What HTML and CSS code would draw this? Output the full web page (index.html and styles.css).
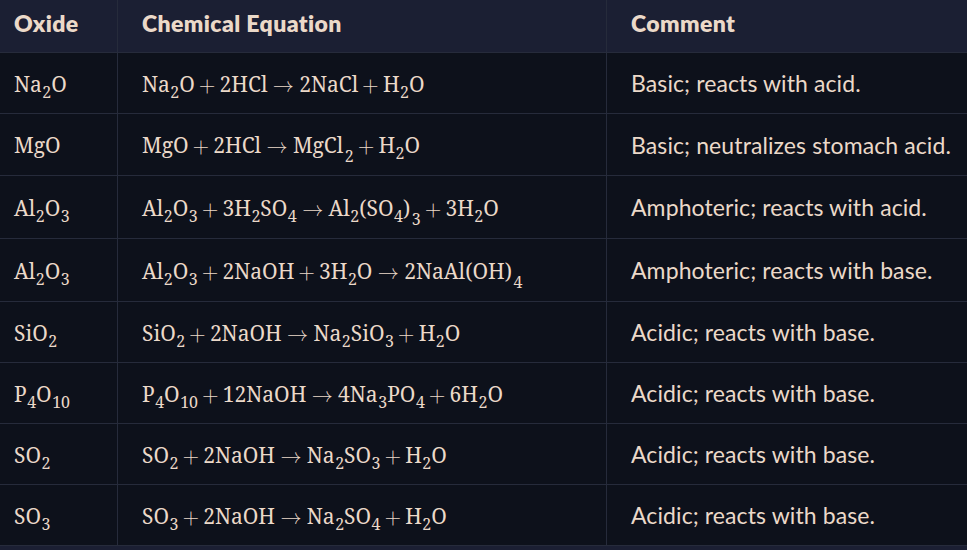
FILE: index.html
```html
<!DOCTYPE html>
<html>
<head>
<meta charset="utf-8">
<link rel="stylesheet" href="styles.css">
</head>
<body>
<div class="wrap">
<table class="tbl">
<thead>
<tr><th class="c1">Oxide</th><th class="c2">Chemical Equation</th><th class="c3">Comment</th></tr>
</thead>
<tbody>
<tr>
<td class="c1"><span class="chem">Na<sub class="s">2</sub>O</span></td>
<td class="c2"><span class="chem">Na<sub class="s">2</sub>O<span class="op">+</span>2HCl<span class="rel">→</span>2NaCl<span class="op">+</span>H<sub class="s">2</sub>O</span></td>
<td class="c3">Basic; reacts with acid.</td>
</tr>
<tr class="h61">
<td class="c1"><span class="chem">MgO</span></td>
<td class="c2"><span class="chem">MgO<span class="op">+</span>2HCl<span class="rel">→</span>MgCl<sub class="s lo">2</sub><span class="op">+</span>H<sub class="s">2</sub>O</span></td>
<td class="c3">Basic; neutralizes stomach acid.</td>
</tr>
<tr class="h62">
<td class="c1"><span class="chem">Al<sub class="s">2</sub>O<sub class="s">3</sub></span></td>
<td class="c2"><span class="chem">Al<sub class="s">2</sub>O<sub class="s">3</sub><span class="op">+</span>3H<sub class="s">2</sub>SO<sub class="s">4</sub><span class="rel">→</span>Al<sub class="s">2</sub>(SO<sub class="s">4</sub>)<sub class="s lo">3</sub><span class="op">+</span>3H<sub class="s">2</sub>O</span></td>
<td class="c3">Amphoteric; reacts with acid.</td>
</tr>
<tr class="h62">
<td class="c1"><span class="chem">Al<sub class="s">2</sub>O<sub class="s">3</sub></span></td>
<td class="c2"><span class="chem">Al<sub class="s">2</sub>O<sub class="s">3</sub><span class="op">+</span>2NaOH<span class="op">+</span>3H<sub class="s">2</sub>O<span class="rel">→</span>2NaAl(OH)<sub class="s lo">4</sub></span></td>
<td class="c3">Amphoteric; reacts with base.</td>
</tr>
<tr>
<td class="c1"><span class="chem">SiO<sub class="s">2</sub></span></td>
<td class="c2"><span class="chem">SiO<sub class="s">2</sub><span class="op">+</span>2NaOH<span class="rel">→</span>Na<sub class="s">2</sub>SiO<sub class="s">3</sub><span class="op">+</span>H<sub class="s">2</sub>O</span></td>
<td class="c3">Acidic; reacts with base.</td>
</tr>
<tr>
<td class="c1"><span class="chem">P<sub class="s">4</sub>O<sub class="s">10</sub></span></td>
<td class="c2"><span class="chem">P<sub class="s">4</sub>O<sub class="s">10</sub><span class="op">+</span>12NaOH<span class="rel">→</span>4Na<sub class="s">3</sub>PO<sub class="s">4</sub><span class="op">+</span>6H<sub class="s">2</sub>O</span></td>
<td class="c3">Acidic; reacts with base.</td>
</tr>
<tr>
<td class="c1"><span class="chem">SO<sub class="s">2</sub></span></td>
<td class="c2"><span class="chem">SO<sub class="s">2</sub><span class="op">+</span>2NaOH<span class="rel">→</span>Na<sub class="s">2</sub>SO<sub class="s">3</sub><span class="op">+</span>H<sub class="s">2</sub>O</span></td>
<td class="c3">Acidic; reacts with base.</td>
</tr>
<tr>
<td class="c1"><span class="chem">SO<sub class="s">3</sub></span></td>
<td class="c2"><span class="chem">SO<sub class="s">3</sub><span class="op">+</span>2NaOH<span class="rel">→</span>Na<sub class="s">2</sub>SO<sub class="s">4</sub><span class="op">+</span>H<sub class="s">2</sub>O</span></td>
<td class="c3">Acidic; reacts with base.</td>
</tr>
</tbody>
</table>
</div>
</body>
</html>
```

FILE: styles.css
```css
html, body {
  margin: 0;
  padding: 0;
  overflow: hidden;
  background: #1b1f33;
}
.wrap {
  width: 967px;
  height: 550px;
  overflow: hidden;
  background: #1b1f33;
}
.tbl {
  border-collapse: collapse;
  width: 977px;
  table-layout: fixed;
  color: #ebd9c9;
  font-family: Lato, "Noto Sans", sans-serif;
  white-space: nowrap;
}
.tbl th, .tbl td {
  text-align: left;
  padding: 0 24px;
  border-right: 1px solid #262b3b;
  border-bottom: 1px solid #262b3b;
}
.tbl th {
  height: 46px;
  padding-bottom: 6px;
  font-size: 23px;
  font-weight: 800;
  letter-spacing: 0.4px;
  background: #1b1f33;
}
.tbl td {
  height: 60px;
  background: #0d111b;
  font-size: 23px;
  letter-spacing: 0.1px;
}
.tbl .h61 td { height: 61px; }
.tbl .h62 td { height: 62px; }
.tbl .c1 { width: 79px; padding-left: 14px; }
.tbl .c2 { width: 440px; }
.tbl .c3 { border-right: none; }

.chem {
  font-family: "Noto Serif", "DejaVu Serif", serif;
  font-size: 21px;
  letter-spacing: 0;
}
.chem .s {
  font-size: 0.76em;
  vertical-align: -6px;
  line-height: 0;
  margin-left: 0.5px;
}
.chem .s.lo {
  vertical-align: -9px;
  margin-left: 1.5px;
}
.chem .op,
.chem .rel {
  font-family: math, "Latin Modern Math", "STIX Two Math", "DejaVu Serif", serif;
}
.chem .op { margin: 0 4.2px; }
.chem .rel { margin: 0 5.4px; }
```
